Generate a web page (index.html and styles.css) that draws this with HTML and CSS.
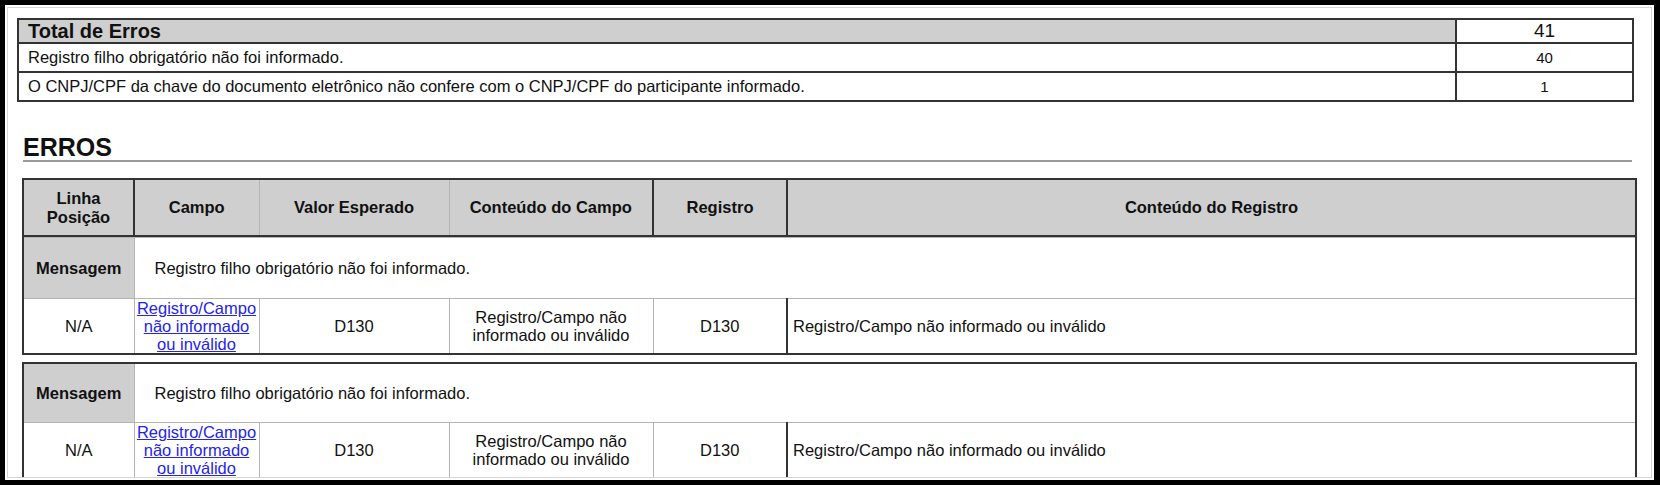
FILE: index.html
```html
<!DOCTYPE html>
<html lang="pt-BR">
<head>
<meta charset="utf-8">
<title>Relatório de Erros</title>
<link rel="stylesheet" href="styles.css">
</head>
<body>
<div class="screen">
  <div class="page">
    <table class="totals">
      <colgroup><col><col class="c-num"></colgroup>
      <tr class="totals-head"><th>Total de Erros</th><td>41</td></tr>
      <tr class="totals-row"><td>Registro filho obrigatório não foi informado.</td><td class="num">40</td></tr>
      <tr class="totals-row"><td>O CNPJ/CPF da chave do documento eletrônico não confere com o CNPJ/CPF do participante informado.</td><td class="num">1</td></tr>
    </table>

    <section class="erros">
      <h2 class="erros-title">ERROS</h2>

      <table class="grid grid-head">
        <colgroup><col class="w1"><col class="w2"><col class="w3"><col class="w4"><col class="w5"><col class="w6"></colgroup>
        <tr>
          <th class="bl-dark">Linha<br>Posição</th>
          <th class="bl-dark">Campo</th>
          <th>Valor Esperado</th>
          <th>Conteúdo do Campo</th>
          <th class="bl-dark">Registro</th>
          <th class="bl-dark">Conteúdo do Registro</th>
        </tr>
      </table>

      <table class="grid block first">
        <colgroup><col class="w1"><col class="w2"><col class="w3"><col class="w4"><col class="w5"><col class="w6"></colgroup>
        <tr class="msg-row">
          <th class="msg-label">Mensagem</th>
          <td class="msg-text" colspan="5">Registro filho obrigatório não foi informado.</td>
        </tr>
        <tr class="data-row">
          <td>N/A</td>
          <td class="bl-mid"><a href="#" class="field-link">Registro/Campo não informado ou inválido</a></td>
          <td class="bl-mid">D130</td>
          <td>Registro/Campo não informado ou inválido</td>
          <td>D130</td>
          <td class="bl-dark reg">Registro/Campo não informado ou inválido</td>
        </tr>
      </table>

      <table class="grid block">
        <colgroup><col class="w1"><col class="w2"><col class="w3"><col class="w4"><col class="w5"><col class="w6"></colgroup>
        <tr class="msg-row">
          <th class="msg-label">Mensagem</th>
          <td class="msg-text" colspan="5">Registro filho obrigatório não foi informado.</td>
        </tr>
        <tr class="data-row">
          <td>N/A</td>
          <td class="bl-mid"><a href="#" class="field-link">Registro/Campo não informado ou inválido</a></td>
          <td class="bl-mid">D130</td>
          <td>Registro/Campo não informado ou inválido</td>
          <td>D130</td>
          <td class="bl-dark reg">Registro/Campo não informado ou inválido</td>
        </tr>
      </table>
    </section>
  </div>
</div>
</body>
</html>
```

FILE: styles.css
```css
html, body {
  margin: 0;
  padding: 0;
}
body {
  background: #000;
  height: 485px;
  overflow: hidden;
  font-family: "Liberation Sans", Arial, Helvetica, sans-serif;
  color: #111;
}
.screen {
  margin: 5px 6px 0 5px;
  height: 475px;
  background: #fff;
  padding: 2px;
  box-sizing: border-box;
}
.page {
  height: 100%;
  box-sizing: border-box;
  border: 1px solid #d4d4d4;
  padding: 10px 17px 0 9px;
  overflow: hidden;
}

/* Totals table */
.totals {
  width: 100%;
  border-collapse: collapse;
  border: 2px solid #333;
  font-size: 16.5px;
}
.totals td, .totals th {
  border: 2px solid #333;
  padding: 0 9px;
}
.totals .c-num { width: 177px; }
.totals-head th {
  background: #cfcfcf;
  font-size: 20px;
  font-weight: bold;
  text-align: left;
  height: 22px;
  line-height: 22px;
}
.totals-head td {
  font-size: 19px;
  text-align: center;
  line-height: 22px;
}
.totals-row td { height: 27px; }
.totals .num { text-align: center; font-size: 15px; }

/* Errors section */
.erros {
  margin: 33px 0 0 5px;
}
.erros-title {
  margin: 0 2px 0 1px;
  font-size: 25px;
  font-weight: bold;
  line-height: 25px;
  border-bottom: 2px solid #9a9a9a;
}
.grid {
  width: 1613px;
  table-layout: fixed;
  border-collapse: collapse;
  border: 2px solid #333;
  font-size: 16.5px;
}
.grid col.w1 { width: 111px; }
.grid col.w2 { width: 125px; }
.grid col.w3 { width: 190px; }
.grid col.w4 { width: 204px; }
.grid col.w5 { width: 134px; }
.grid col.w6 { width: 849px; }
.grid th, .grid td {
  border: 1px solid #b4b4b4;
  padding: 0 2px;
  text-align: center;
  vertical-align: middle;
}
.grid-head {
  margin-top: 16px;
}
.grid-head th {
  background: #cfcfcf;
  font-weight: bold;
  height: 55px;
  line-height: 19px;
}
.grid .bl-dark { border-left: 2px solid #333; }
.grid .bl-mid { border-left: 1px solid #777; }

.block { margin-top: 7px; }
.block.first { margin-top: 0; border-top: none; }

.msg-row th, .msg-row td { height: 58px; }
.block.first .msg-row th, .block.first .msg-row td { height: 60px; }
.msg-label {
  background: #cfcfcf;
  font-weight: bold;
  border-right: 1px solid #555;
}
.grid td.msg-text {
  text-align: left;
  padding-left: 20px;
}
.data-row td {
  height: 50px;
  line-height: 18px;
}
.grid td.reg {
  text-align: left;
  padding-left: 5px;
}
.field-link {
  color: #2424e6;
  text-decoration: underline;
}
```
